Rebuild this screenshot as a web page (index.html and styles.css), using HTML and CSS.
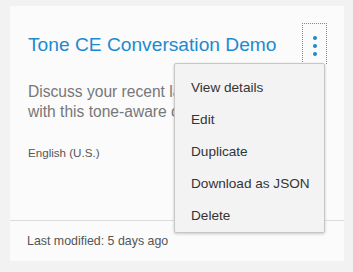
FILE: index.html
```html
<!DOCTYPE html>
<html>
<head>
  <title>Tone CE Conversation Demo</title>
  <link rel="stylesheet" href="styles.css">
</head>

<body>
  <div class="card">
    <div class="card-header">
      <h2 class="card-title">Tone CE Conversation Demo</h2>
      <div class="overflow">
        <button class="overflow-button" type="button" aria-label="More options">
          <span class="dot"></span>
          <span class="dot"></span>
          <span class="dot"></span>
        </button>
        <ul class="overflow-menu">
          <li>View details</li>
          <li>Edit</li>
          <li>Duplicate</li>
          <li>Download as JSON</li>
          <li>Delete</li>
        </ul>
      </div>
    </div>

    <p class="card-desc">Discuss your recent laptop purchase with this tone-aware conversation</p>
    <div class="card-lang">English (U.S.)</div>

    <div class="card-footer">Last modified: 5 days ago</div>
  </div>
</body>
</html>
```

FILE: styles.css
```css
body {
  font-family: 'Liberation Sans', Arial, sans-serif;
  background-color: #f2f2f2;
  margin: 0;
  padding: 6px 9px 11px 10px;
}

/* Card */
.card {
  background-color: #fbfbfb;
  height: 255px;
  display: flex;
  flex-direction: column;
}

.card-header {
  display: flex;
  justify-content: space-between;
  align-items: flex-start;
  padding: 17px 17px 0 18px;
}

.card-title {
  margin: 10px 0 0;
  font-size: 19.2px;
  font-weight: normal;
  color: #1d8ad0;
  line-height: 24px;
}

.card-desc {
  margin: 18px 0 0;
  padding: 0 18px;
  max-width: 270px;
  font-size: 15.6px;
  line-height: 20px;
  color: #777;
}

.card-lang {
  margin-top: 24px;
  padding: 0 18px;
  font-size: 11.6px;
  color: #555;
}

.card-footer {
  margin-top: auto;
  border-top: 1px solid #dcdcdc;
  height: 40px;
  line-height: 40px;
  padding: 0 17px;
  font-size: 12.4px;
  color: #555;
}

/* Overflow menu */
.overflow {
  position: relative;
}

.overflow-button {
  display: flex;
  flex-direction: column;
  align-items: center;
  gap: 4px;
  width: 25px;
  height: 41px;
  padding: 12px 0 0;
  background: none;
  border: 1px dotted #888;
  border-bottom: none;
  cursor: pointer;
}

.dot {
  width: 4px;
  height: 4px;
  border-radius: 50%;
  background-color: #1d8ad0;
}

.overflow-menu {
  position: absolute;
  top: 40px;
  right: 2px;
  width: 149px;
  margin: 0;
  padding: 8px 0 0;
  list-style: none;
  background-color: #f3f3f3;
  border: 1px solid #c6c6c6;
  border-radius: 2px;
  box-shadow: 0 1px 3px rgba(0, 0, 0, 0.2);
  z-index: 1;
}

.overflow-menu li {
  height: 32px;
  line-height: 32px;
  padding: 0 16px;
  font-size: 13.6px;
  color: #333;
  white-space: nowrap;
  cursor: pointer;
}
```
